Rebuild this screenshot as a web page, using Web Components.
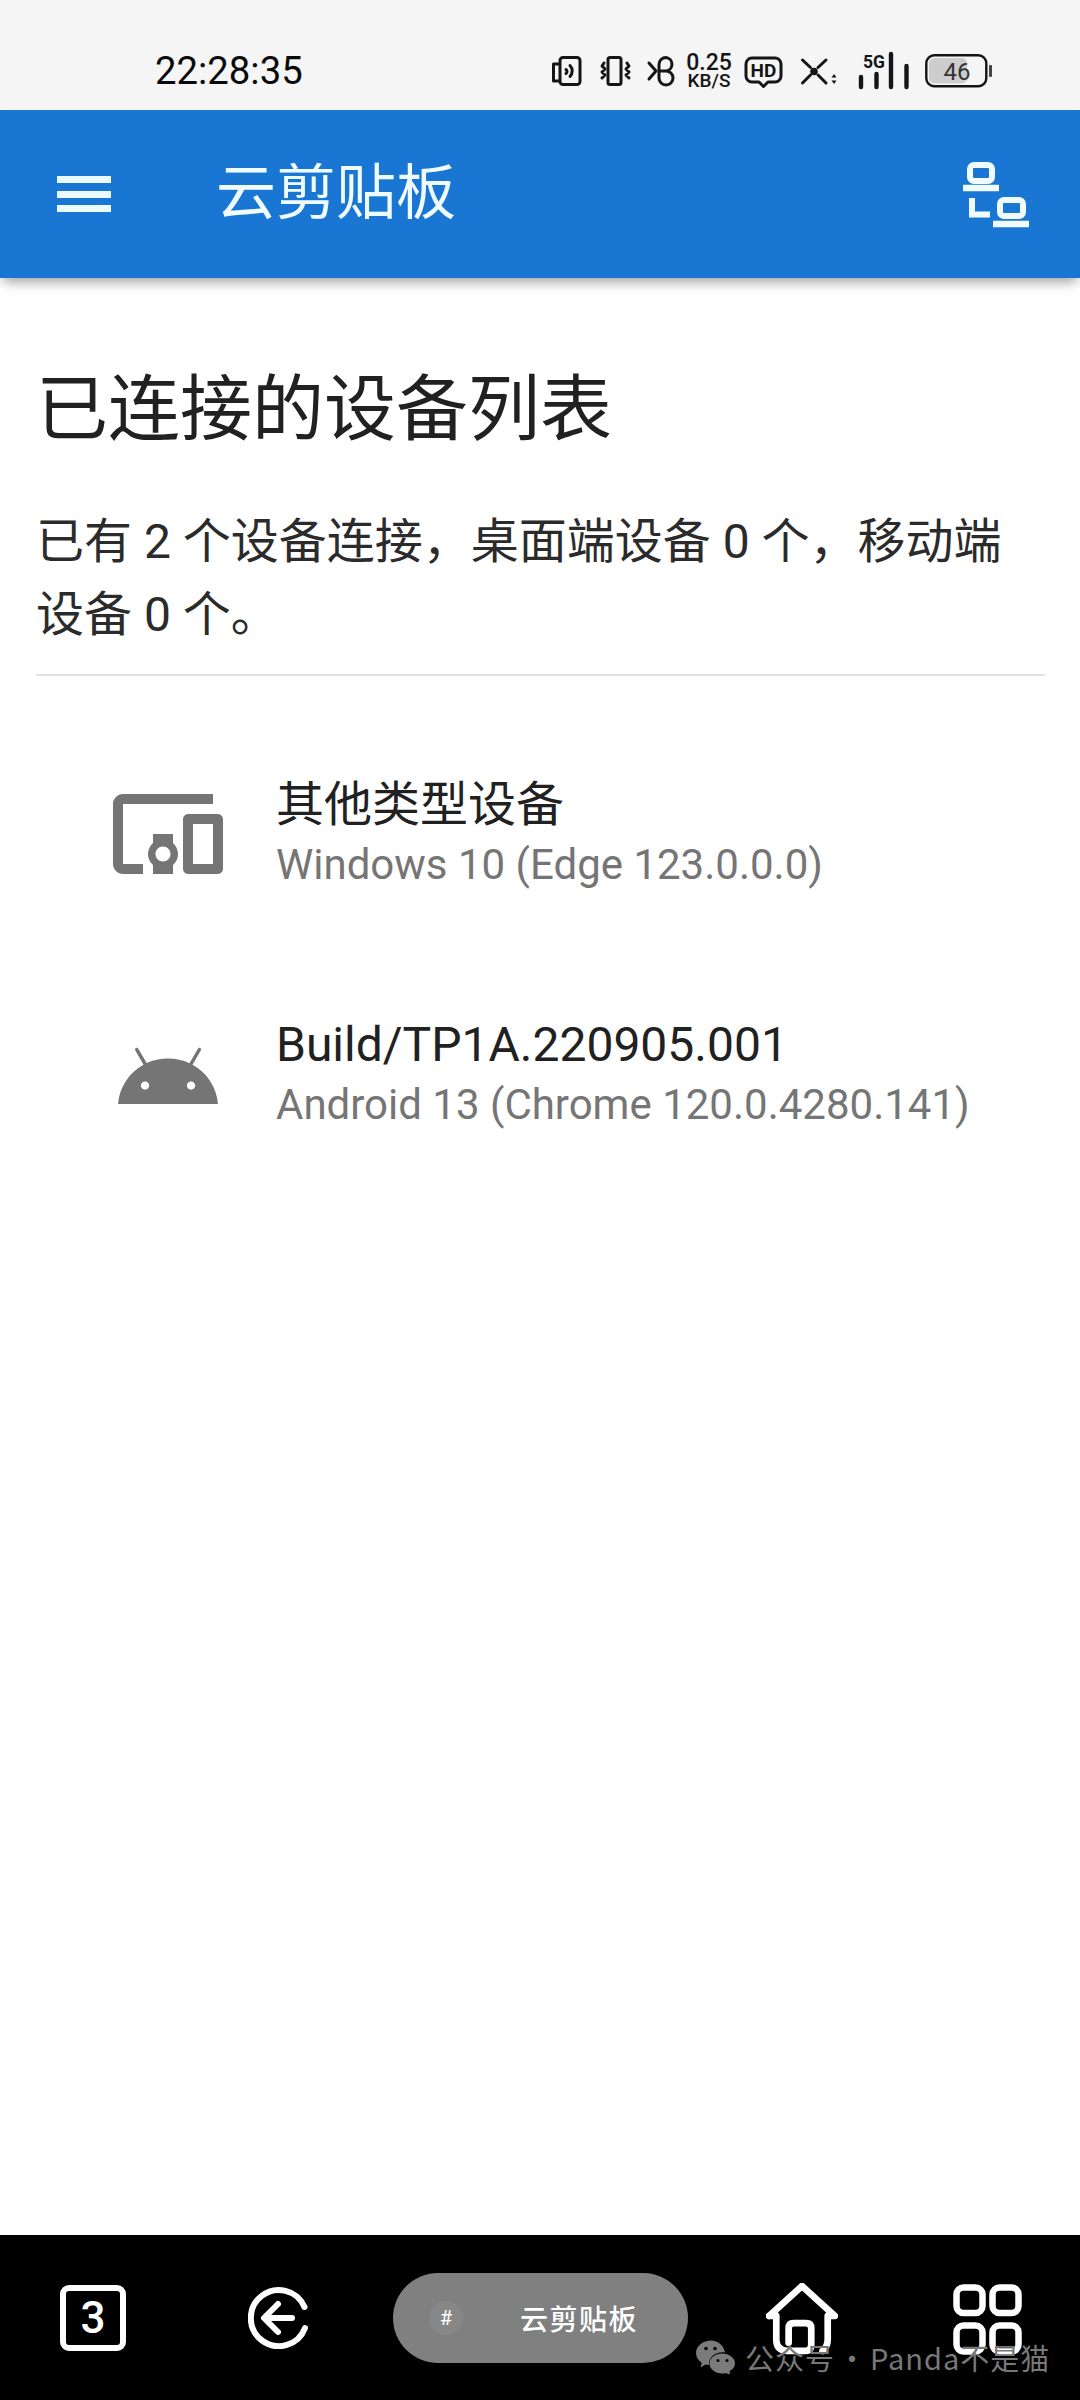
<!DOCTYPE html>
<html lang="zh-CN">
<head>
<meta charset="utf-8">
<title>云剪贴板</title>
<style>
html,body{margin:0;padding:0;background:#fff}
body{width:1080px;height:2400px;display:flex;flex-direction:column;font-family:Roboto,"Noto Sans CJK SC",sans-serif;overflow:hidden}
</style>
</head>
<body>
<status-bar></status-bar>
<app-bar>云剪贴板</app-bar>
<device-page heading="已连接的设备列表">
  <span slot="summary">已有 2 个设备连接，桌面端设备 0 个，移动端设备 0 个。</span>
  <device-item type="other" name="其他类型设备" detail="Windows 10 (Edge 123.0.0.0)"></device-item>
  <device-item type="android" name="Build/TP1A.220905.001" detail="Android 13 (Chrome 120.0.4280.141)"></device-item>
</device-page>
<nav-bar></nav-bar>
<script>
const F='Roboto,"Noto Sans CJK SC",sans-serif';
class StatusBar extends HTMLElement{
  constructor(){super();this.attachShadow({mode:'open'}).innerHTML=`
  <style>
  :host{display:flex;align-items:center;height:78px;padding:32px 88px 0 155px;background:#f5f5f5;color:#111;flex:none}
  .time{font-size:38.3px;line-height:40px;color:#0a0a0a;margin-right:auto}
  svg{display:block;height:40px;flex:none;overflow:visible}
  .s{fill:none;stroke:#151515;stroke-width:3;stroke-linecap:round;stroke-linejoin:round}
  .speed{width:48px;margin-left:10px;display:flex;flex-direction:column;align-items:center;font-weight:500;color:#151515}
  .speed b{font-weight:500;font-size:23px;line-height:20px}
  .speed i{font-style:normal;font-size:19px;line-height:16px}
  text{font-family:${F}}
  </style>
  <span class="time">22:28:35</span>
  <svg width="30" viewBox="0 0 30 40"><path class="s" d="M11 6.500h14a3 3 0 0 1 3 3v21a3 3 0 0 1-3 3H11a3 3 0 0 1-3-3V9.500a3 3 0 0 1 3-3zM8 13H1.500v17H8"/><path class="s" d="M14 18.500a2.500 2.500 0 0 1 0 4M18 14.500a8 8 0 0 1 0 11"/></svg>
  <svg width="31" viewBox="0 0 31 40" style="margin-left:18px"><rect class="s" x="8" y="6.500" width="13" height="27" rx="2"/><path class="s" d="M4 12l-2 3 3 3-3 3 3 3-3 3M27 12l2 3-3 3 3 3-3 3 3 3"/></svg>
  <svg width="27" viewBox="0 0 27 40" style="margin-left:17px"><path class="s" d="M1 12l7 8-7 8"/><path class="s" d="M11 20V13.500a7 7 0 0 1 7-7 6.800 6.800 0 0 1 0 13.500h-7zM11 20v7a7 7 0 0 0 7 7 7 7 0 0 0 0-14"/></svg>
  <div class="speed"><b>0.25</b><i>KB/S</i></div>
  <svg width="37" viewBox="0 0 37 40" style="margin-left:12px"><path class="s" d="M7 7h23a6 6 0 0 1 6 6v12a6 6 0 0 1-6 6h-7l-4.500 4.500L14 31H7a6 6 0 0 1-6-6V13a6 6 0 0 1 6-6z"/><text x="18.500" y="25.500" text-anchor="middle" font-size="19" font-weight="700" fill="#151515">HD</text></svg>
  <svg width="37" viewBox="0 0 37 40" style="margin-left:19px"><path class="s" d="M1.500 9l8 7.500M25 9l-8 7.500M1.500 32l8-8M25 32l-8-8"/><circle cx="13" cy="20.500" r="3.800" fill="#151515"/><path d="M33 23l2.500 3.500h-5zM33 33l-2.500-3.500h5z" fill="#151515"/></svg>
  <svg width="52" viewBox="0 0 52 40" style="margin-left:20px"><text x="16" y="17" font-size="18" font-weight="700" fill="#151515" text-anchor="middle" textLength="22" lengthAdjust="spacingAndGlyphs">5G</text><path d="M3 26v10M18.500 23v13M33 3v33M48.500 15v21" stroke="#151515" stroke-width="4.400" stroke-linecap="round" fill="none"/></svg>
  <svg width="67" viewBox="0 0 67 40" style="margin-left:15px"><rect x="4" y="7" width="38" height="25.500" rx="5" fill="#cdcdcd"/><rect class="s" x="1.300" y="4.300" width="60" height="31" rx="8" style="stroke-width:2.400"/><rect x="64" y="14" width="3" height="12" rx="1" fill="#444"/><text x="32" y="28.500" text-anchor="middle" font-size="24" fill="#333">46</text></svg>`}
}
class AppBar extends HTMLElement{
  constructor(){super();this.attachShadow({mode:'open'}).innerHTML=`
  <style>
  :host{display:flex;align-items:center;height:168px;background:#1976d2;color:#f0fbff;flex:none;position:relative;z-index:2;
    box-shadow:0 6px 10px -3px rgba(0,0,0,.28),0 10px 14px -4px rgba(0,0,0,.12);padding:0 49px 0 57px}
  .menu{width:54px;height:36px;flex:none}
  .title{font-size:60px;line-height:80px;margin-left:105px;flex:1;font-weight:400}
  .net{width:70px;height:70px;flex:none}
  </style>
  <svg class="menu" viewBox="0 0 54 36"><path d="M0 0h54v7H0zM0 15h54v7H0zM0 29h54v7H0z" fill="#eafaff"/></svg>
  <div class="title"><slot></slot></div>
  <svg class="net" viewBox="0 0 70 70" fill="none" stroke="#f0fbff" stroke-width="6">
    <rect x="9" y="6" width="22" height="16" rx="4"/><path d="M2 29h36" stroke-width="6.500"/>
    <path d="M11 39v16.500h18"/>
    <rect x="39" y="41" width="23" height="16" rx="4"/><path d="M32 65h36" stroke-width="6.500"/>
  </svg>`}
}
class DevicePage extends HTMLElement{
  constructor(){super();const h=this.getAttribute('heading');this.attachShadow({mode:'open'}).innerHTML=`
  <style>
  :host{display:block;flex:1;padding:0 35px 0 36px;min-height:0;color:#212121}
  h1{margin:87px 0 0;font-size:72px;line-height:90px;font-weight:400;color:#212121}
  p{margin:50px 0 0;font-size:48px;line-height:73px;color:#2b2b2b}
  hr{margin:23px 0 39px;border:0;height:2px;background:#e2e2e2}
  </style>
  <h1>${h}</h1>
  <p><slot name="summary"></slot></p>
  <hr>
  <slot></slot>`}
}
const ICONS={
 other:'M3 6h18V4H3c-1.100 0-2 .9-2 2v12c0 1.100.9 2 2 2h4v-2H3V6zm10 6H9v1.780c-.61.55-1 1.330-1 2.220s.39 1.670 1 2.220V20h4v-1.780c.61-.55 1-1.340 1-2.220s-.39-1.670-1-2.220V12zm-2 5.500c-.83 0-1.500-.67-1.500-1.500s.67-1.500 1.500-1.500 1.500.67 1.500 1.500-.67 1.500-1.500 1.500zM22 8h-6c-.5 0-1 .5-1 1v10c0 .5.5 1 1 1h6c.5 0 1-.5 1-1V9c0-.5-.5-1-1-1zm-1 10h-4v-8h4v8z',
 android:'M16.610 15.150C16.150 15.150 15.770 14.780 15.770 14.320S16.150 13.500 16.610 13.500H16.610C17.070 13.500 17.450 13.860 17.450 14.320C17.450 14.780 17.070 15.150 16.610 15.150M7.410 15.150C6.950 15.150 6.570 14.780 6.570 14.320C6.570 13.860 6.950 13.500 7.410 13.500H7.410C7.870 13.500 8.240 13.860 8.240 14.320C8.240 14.780 7.870 15.150 7.410 15.150M16.910 10.140L18.580 7.260C18.670 7.090 18.610 6.880 18.450 6.790C18.280 6.690 18.070 6.750 18 6.920L16.290 9.830C14.950 9.220 13.500 8.900 12 8.910C10.470 8.910 9 9.240 7.730 9.820L6.040 6.910C5.950 6.740 5.740 6.680 5.570 6.780C5.400 6.870 5.350 7.080 5.440 7.250L7.100 10.130C4.250 11.690 2.290 14.580 2 18H22C21.720 14.590 19.770 11.700 16.910 10.140H16.910Z'};
class DeviceItem extends HTMLElement{
  constructor(){super();const a=n=>this.getAttribute(n);this.attachShadow({mode:'open'}).innerHTML=`
  <style>
  :host{display:flex;align-items:center;height:240px;padding-left:72px}
  svg{width:120px;height:120px;flex:none;fill:#757575;margin-bottom:3px}
  .t{margin-left:48px;display:flex;flex-direction:column}
  .n{font-size:48px;line-height:60px;color:#212121;white-space:nowrap}
  .d{font-size:42px;line-height:60px;color:#757575;white-space:nowrap}
  </style>
  <svg viewBox="0 0 24 24"><path d="${ICONS[a('type')]}"/></svg>
  <div class="t"><div class="n">${a('name')}</div><div class="d">${a('detail')}</div></div>`}
}
class NavBar extends HTMLElement{
  constructor(){super();this.attachShadow({mode:'open'}).innerHTML=`
  <style>
  :host{display:block;height:165px;background:#000;flex:none;position:relative}
  .row{display:flex;align-items:center;height:100%;padding-left:60px;box-sizing:border-box}
  svg{display:block;flex:none;fill:none;stroke:#fff;stroke-linecap:round;stroke-linejoin:round}
  .task{width:66px;height:66px;box-sizing:border-box;border:6px solid #fff;border-radius:9px;color:#fff;font-size:44px;font-weight:500;display:flex;align-items:center;justify-content:center;margin-top:1px;flex:none}
  .pill{width:295px;height:90px;margin-left:83px;border-radius:45px;background:#808080;display:flex;align-items:center;color:#fff;box-sizing:border-box;padding-left:36px;flex:none}
  .hash{width:34px;height:34px;border-radius:50%;background:#878787;font-size:20px;display:flex;align-items:center;justify-content:center;flex:none;margin-top:1px}
  .pt{margin-left:57px;font-size:28px;font-weight:500;letter-spacing:1.500px;white-space:nowrap;margin-top:1px}
  .mark{position:absolute;left:696px;top:105px;display:flex;align-items:center;color:#787878;font-family:"Noto Sans CJK SC",sans-serif;font-size:29px;line-height:34px;white-space:nowrap}
  .mark span{margin-left:10px;letter-spacing:1px;word-spacing:-5px}
  </style>
  <div class="row">
    <div class="task">3</div>
    <svg width="62" height="62" viewBox="0 0 62 62" style="margin-left:122px" stroke-width="6"><path d="M56.500 20A28 28 0 1 0 57 41"/><path d="M44 31H18M30 17L16 31l14 14"/></svg>
    <div class="pill"><div class="hash">#</div><div class="pt">云剪贴板</div></div>
    <svg width="72" height="72" viewBox="0 0 70 70" style="margin-left:78px;margin-top:3px" stroke-width="6.500"><path d="M3 32L35 3l32 29H60M3 32h7v23q0 11 11 11h17q6 0 6-6V44q0-5-5-5H27q-5 0-5 5v14M60 32v23q0 7-5 11"/></svg>
    <svg width="69" height="71" viewBox="0 0 69 71" style="margin-left:115px;margin-top:3px" stroke-width="6.500"><rect x="3.500" y="3.500" width="26" height="25.500" rx="7"/><rect x="39.500" y="3.500" width="26" height="25.500" rx="7"/><rect x="3.500" y="41.500" width="26" height="26" rx="7"/><rect x="39.500" y="41.500" width="26" height="26" rx="7"/></svg>
  </div>
  <div class="mark">
    <svg width="39" height="34" viewBox="0 0 39 33" style="stroke:none;fill:#7b7b7b"><path d="M15 0C7 0 0 5.500 0 12.500c0 4 2.200 7.400 5.700 9.700L4.500 27l5-3c1 .3 2.400.5 3.500.5C12.500 16 20 11 29 12 28 5 22 0 15 0z"/><path d="M26 13c-7 0-12.500 4.500-12.500 10s5.500 10 12.500 10c1.500 0 2.800-.2 4-.6l4.500 2.600-1-4.200c3.300-1.800 5.500-4.600 5.500-7.800 0-5.500-5.500-10-13-10z"/><circle cx="10" cy="8" r="1.800" fill="#000"/><circle cx="19" cy="8" r="1.800" fill="#000"/><circle cx="22" cy="20" r="1.500" fill="#000"/><circle cx="31" cy="20" r="1.500" fill="#000"/></svg>
    <span>公众号 · Panda不是猫</span>
  </div>`}
}
customElements.define('status-bar',StatusBar);
customElements.define('app-bar',AppBar);
customElements.define('device-page',DevicePage);
customElements.define('device-item',DeviceItem);
customElements.define('nav-bar',NavBar);
</script>
</body>
</html>
